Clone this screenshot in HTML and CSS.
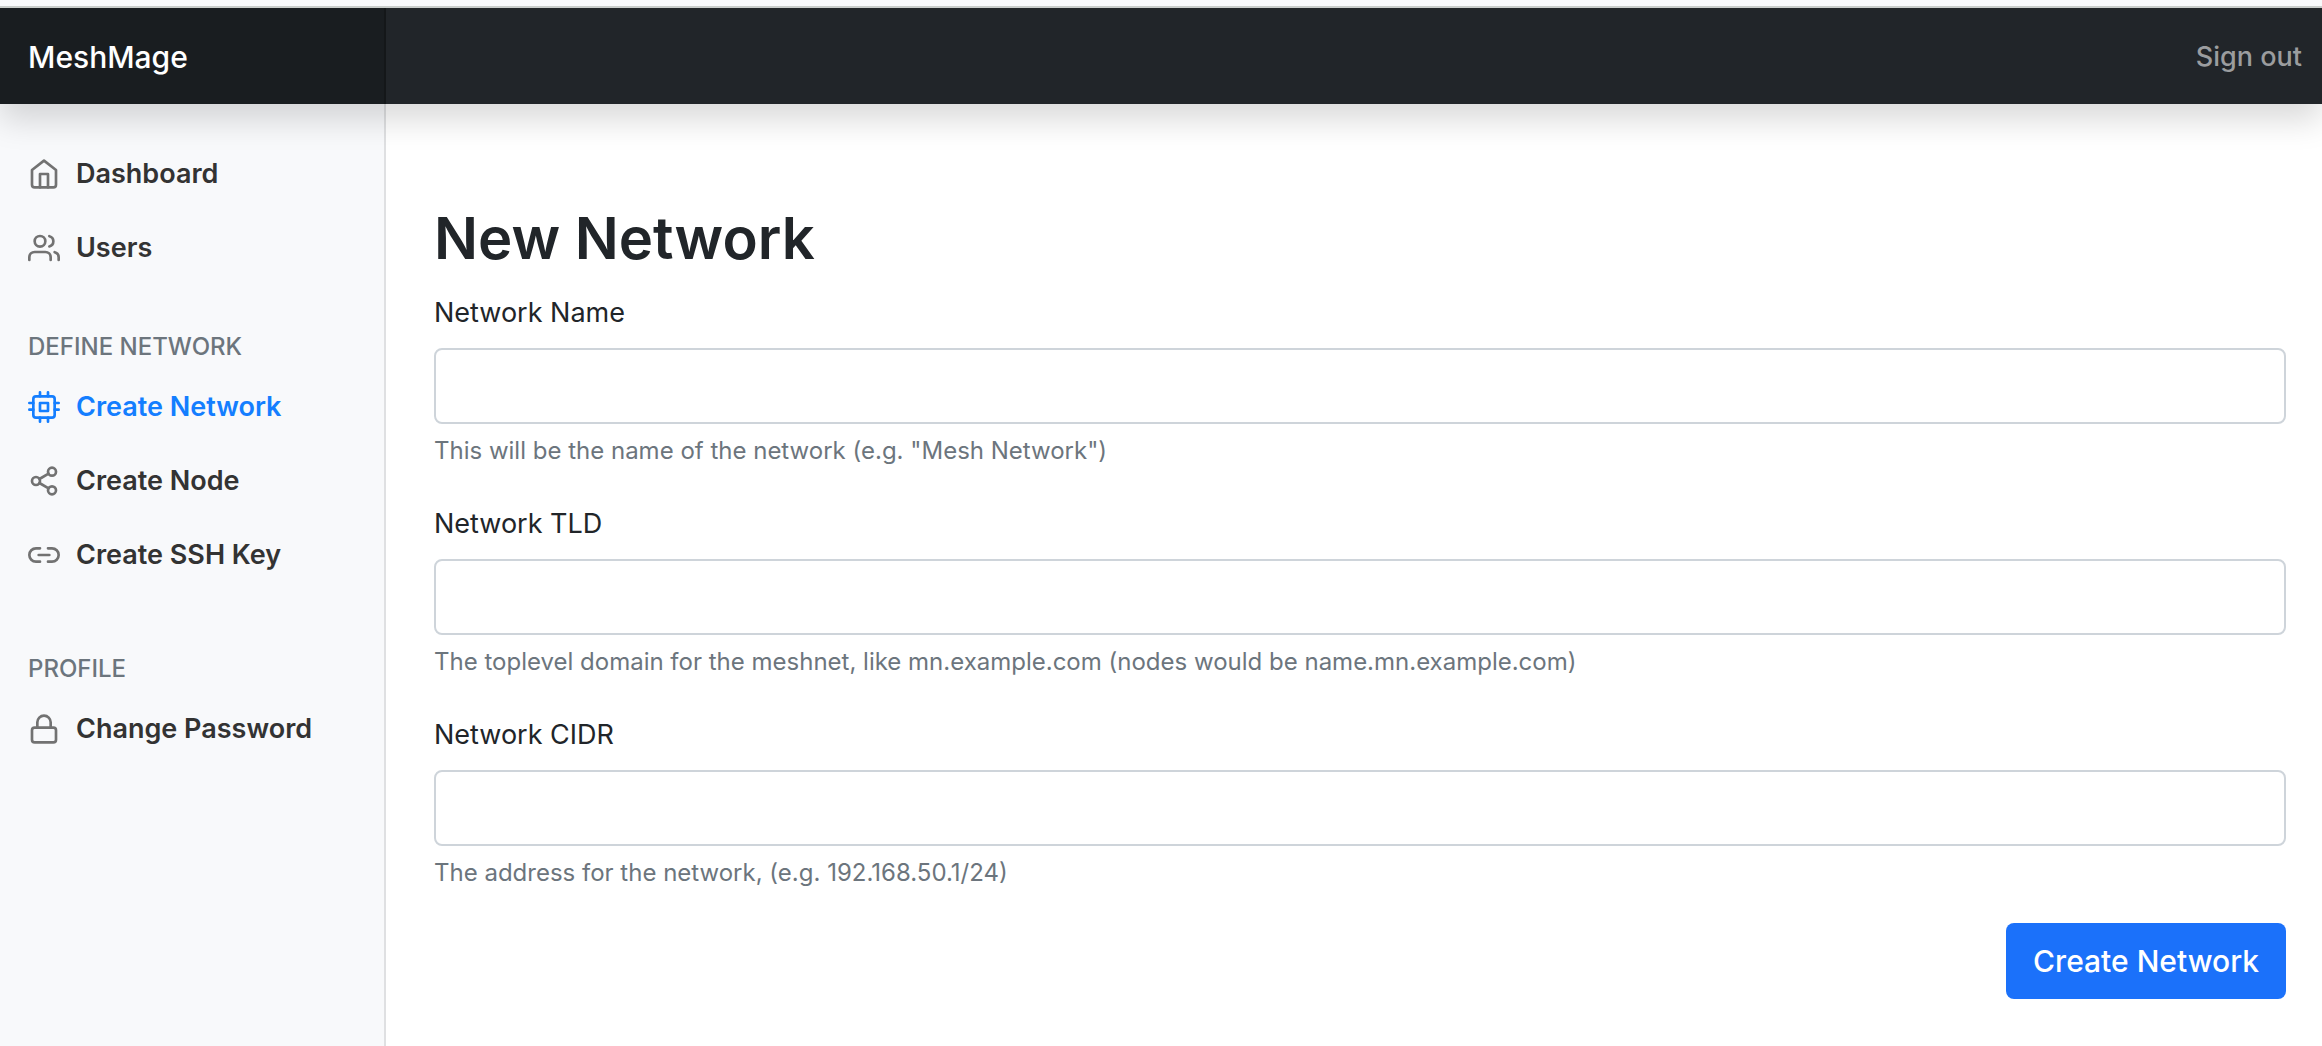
FILE: index.html
```html
<!DOCTYPE html>
<html lang="en">
<head>
<meta charset="utf-8">
<meta name="viewport" content="width=device-width, initial-scale=1">
<title>MeshMage</title>
<link rel="stylesheet" href="styles.css">
</head>
<body>
<header class="navbar">
  <a class="brand" href="#">MeshMage</a>
  <a class="signout" href="#">Sign out</a>
</header>
<div class="layout">
  <nav class="sidebar">
    <ul class="nav">
      <li><a class="nav-link" href="#"><svg class="icon" viewBox="0 0 24 24"><path d="M3 9l9-7 9 7v11a2 2 0 0 1-2 2H5a2 2 0 0 1-2-2z"/><path d="M9 22V12h6v10"/></svg>Dashboard</a></li>
      <li><a class="nav-link" href="#"><svg class="icon" viewBox="0 0 24 24"><path d="M17 21v-2a4 4 0 0 0-4-4H5a4 4 0 0 0-4 4v2"/><circle cx="9" cy="7" r="4"/><path d="M23 21v-2a4 4 0 0 0-3-3.87"/><path d="M16 3.13a4 4 0 0 1 0 7.75"/></svg>Users</a></li>
    </ul>
    <h2 class="nav-heading">Define network</h2>
    <ul class="nav nav-spaced">
      <li><a class="nav-link active" href="#" aria-current="page"><svg class="icon" viewBox="0 0 24 24"><rect x="4" y="4" width="16" height="16" rx="2"/><rect x="9" y="9" width="6" height="6"/><path d="M9 1v3M15 1v3M9 20v3M15 20v3M20 9h3M20 14h3M1 9h3M1 14h3"/></svg>Create Network</a></li>
      <li><a class="nav-link" href="#"><svg class="icon" viewBox="0 0 24 24"><circle cx="18" cy="5" r="3"/><circle cx="6" cy="12" r="3"/><circle cx="18" cy="19" r="3"/><path d="M8.59 13.51l6.83 3.98M15.41 6.51l-6.82 3.98"/></svg>Create Node</a></li>
      <li><a class="nav-link" href="#"><svg class="icon" viewBox="0 0 24 24"><path d="M15 7h3a5 5 0 0 1 5 5 5 5 0 0 1-5 5h-3m-6 0H6a5 5 0 0 1-5-5 5 5 0 0 1 5-5h3"/><path d="M8 12h8"/></svg>Create SSH Key</a></li>
    </ul>
    <h2 class="nav-heading">Profile</h2>
    <ul class="nav">
      <li><a class="nav-link" href="#"><svg class="icon" viewBox="0 0 24 24"><rect x="3" y="11" width="18" height="11" rx="2"/><path d="M7 11V7a5 5 0 0 1 10 0v4"/></svg>Change Password</a></li>
    </ul>
  </nav>
  <main class="content">
    <h1 class="title">New Network</h1>
    <form class="form">
      <div class="field">
        <label class="label" for="name">Network Name</label>
        <input class="input" id="name" type="text" aria-describedby="name-help">
        <p class="help" id="name-help">This will be the name of the network (e.g. "Mesh Network")</p>
      </div>
      <div class="field">
        <label class="label" for="tld">Network TLD</label>
        <input class="input" id="tld" type="text" aria-describedby="tld-help">
        <p class="help" id="tld-help">The toplevel domain for the meshnet, like mn.example.com (nodes would be name.mn.example.com)</p>
      </div>
      <div class="field">
        <label class="label" for="cidr">Network CIDR</label>
        <input class="input" id="cidr" type="text" aria-describedby="cidr-help">
        <p class="help" id="cidr-help">The address for the network, (e.g. 192.168.50.1/24)</p>
      </div>
      <button class="submit" type="submit">Create Network</button>
    </form>
  </main>
</div>
</body>
</html>
```
FILE: styles.css
```css
* {
  box-sizing: border-box;
}

body {
  margin: 0;
  min-height: 100vh;
  display: flex;
  flex-direction: column;
  font-family: Inter, "Liberation Sans", sans-serif;
  font-size: 27px;
  line-height: 42px;
  color: #212529;
  background: #fff;
  border-top: 6px solid #f8f9fb;
}

a {
  color: inherit;
  text-decoration: none;
}

.navbar {
  position: relative;
  z-index: 1;
  display: flex;
  align-items: stretch;
  justify-content: space-between;
  height: 98px;
  border-top: 2px solid #c9cdcb;
  background: #212529;
  box-shadow: 0 16px 32px rgba(0, 0, 0, 0.15);
}

.brand {
  display: flex;
  align-items: center;
  width: 386px;
  padding: 2px 28px 0;
  font-size: 30px;
  font-weight: 500;
  color: #fff;
  background: #191d20;
  border-right: 2px solid #141719;
}

.signout {
  display: flex;
  align-items: center;
  padding: 2px 20px 0;
  font-weight: 500;
  color: #9b9d9f;
}

.layout {
  flex: 1;
  display: flex;
}

.sidebar {
  flex: none;
  width: 386px;
  padding-top: 33px;
  background: #f8f9fb;
  border-right: 2px solid #dfe0e2;
}

.nav {
  margin: 0;
  padding: 0;
  list-style: none;
}

.nav-spaced {
  margin-bottom: 62px;
}

.nav-heading {
  margin: 47px 28px 9px;
  font-size: 24px;
  line-height: 29px;
  font-weight: 500;
  text-transform: uppercase;
  color: #6c757d;
}

.nav-link {
  display: flex;
  align-items: center;
  gap: 16px;
  padding: 16px 28px;
  font-weight: 600;
  color: #333;
  white-space: nowrap;
}

.nav-link.active {
  color: #147eff;
}

.icon {
  flex: none;
  width: 32px;
  height: 32px;
  fill: none;
  stroke: #727272;
  stroke-width: 2;
  stroke-linecap: round;
  stroke-linejoin: round;
}

.active .icon {
  stroke: currentColor;
}

.content {
  flex: 1;
  min-width: 0;
  padding: 96px 36px 40px 48px;
}

.title {
  margin: 0 0 14px;
  font-size: 58px;
  line-height: 76px;
  font-weight: 600;
}

.form {
  display: flex;
  flex-direction: column;
  gap: 32px;
}

.field {
  display: flex;
  flex-direction: column;
}

.label {
  margin-bottom: 12px;
  line-height: 46px;
}

.input {
  width: 100%;
  height: 76px;
  padding: 12px 24px;
  font: inherit;
  color: inherit;
  background: #fff;
  border: 2px solid #ced4da;
  border-radius: 8px;
}

.help {
  margin: 8px 0 0;
  font-size: 24px;
  line-height: 37px;
  color: #6c757d;
}

.submit {
  align-self: flex-end;
  height: 76px;
  padding: 0 27px;
  font-family: inherit;
  font-size: 30px;
  font-weight: 500;
  color: #fff;
  background: #1b71fa;
  border: 0;
  border-radius: 8px;
}
```
